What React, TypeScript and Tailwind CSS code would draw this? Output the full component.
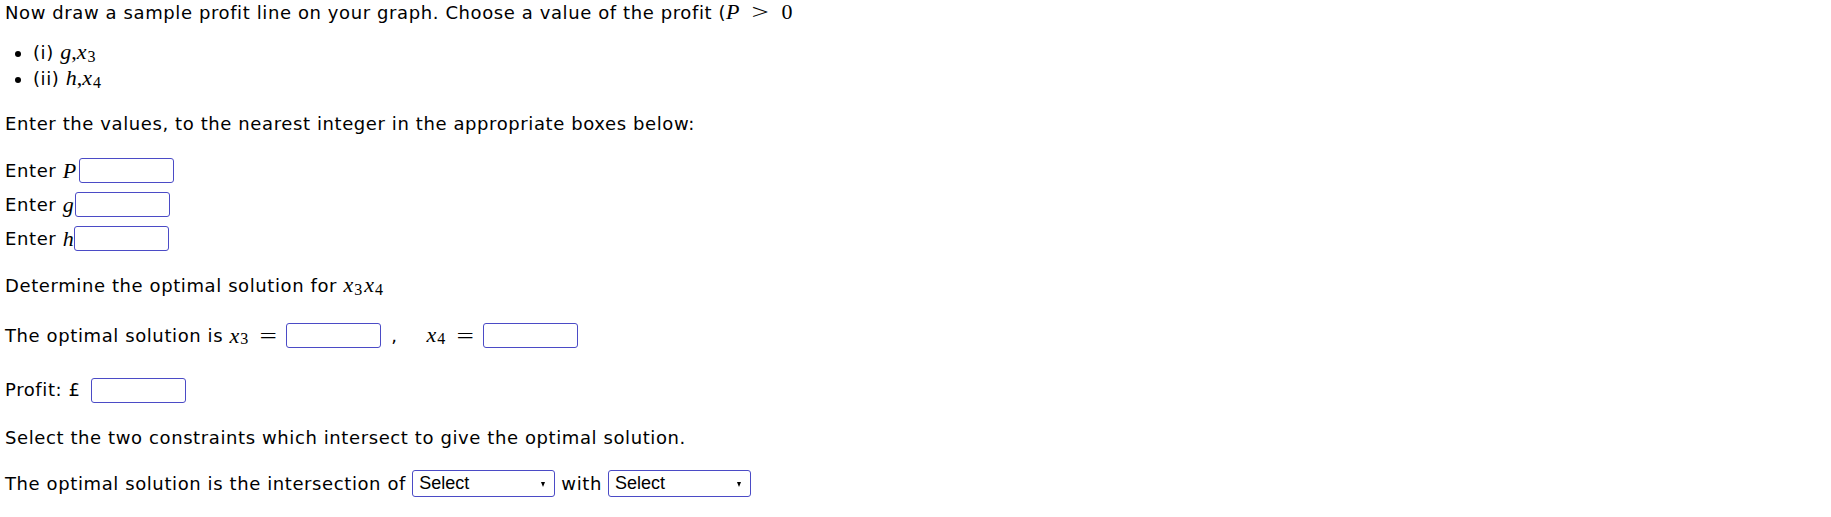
import React from "react";

const serif = "font-['Liberation_Serif','DejaVu_Serif',serif]";

function M({ children, className = "" }: { children: React.ReactNode; className?: string }) {
  return (
    <span className={`${serif} italic text-[22px] leading-none tracking-normal ${className}`}>
      {children}
    </span>
  );
}

function Sub({ children }: { children: React.ReactNode }) {
  return (
    <span className={`${serif} not-italic text-[16px] relative top-[3px] ml-[1px] mr-[2px] leading-none tracking-normal`}>
      {children}
    </span>
  );
}

function Op({ children, className = "" }: { children: React.ReactNode; className?: string }) {
  return <span className={`${serif} text-[22px] leading-none tracking-normal ${className}`}>{children}</span>;
}

// relation sign (=, >) with the wide glyph and side spacing of typeset math
function Rel({ children, className = "" }: { children: React.ReactNode; className?: string }) {
  return (
    <span className={`inline-flex justify-center ${className}`}>
      <span className={`${serif} inline-block text-[22px] leading-none tracking-normal scale-x-[1.4]`}>
        {children}
      </span>
    </span>
  );
}

function Box() {
  return (
    <input
      type="text"
      className="w-[95px] h-[25px] border border-[#4b4bc6] rounded-[3px] bg-white align-middle outline-none"
    />
  );
}

function Select() {
  return (
    <span className="relative inline-flex items-center align-middle w-[143px] h-[27px] border border-[#4b4bc6] rounded-[3px] bg-white pl-[6px] font-['Liberation_Sans',Arial,sans-serif] text-[18px] tracking-normal text-black">
      Select
      <span className="absolute right-[9px] top-[11px] w-0 h-0 border-l-[2.5px] border-r-[2.5px] border-t-[5px] border-l-transparent border-r-transparent border-t-black" />
    </span>
  );
}

export default function App() {
  return (
    <div className="bg-white min-h-[517px] pl-[5px] pt-[1px] text-[18px] tracking-[0.6px] text-black font-['DejaVu_Sans',Verdana,sans-serif]">
      <p className="h-[21px] leading-[21px]">
        Now draw a sample profit line on your graph. Choose a value of the profit (<M>P</M>
        <Rel className="w-[42px]">&gt;</Rel>
        <Op>0</Op>
      </p>

      <ul className="list-disc pl-[28px] mt-[18px]">
        <li className="h-[26px] leading-[26px]">
          (i) <M>g</M>
          <Op>,</Op>
          <M>x</M>
          <Sub>3</Sub>
        </li>
        <li className="h-[26px] leading-[26px]">
          (ii) <M>h</M>
          <Op>,</Op>
          <M>x</M>
          <Sub>4</Sub>
        </li>
      </ul>

      <p className="mt-[20px] h-[24px] leading-[24px]">
        Enter the values, to the nearest integer in the appropriate boxes below:
      </p>

      <div className="mt-[22px] flex flex-col gap-[9px]">
        <div className="h-[25px] flex items-center">
          Enter&nbsp;<M className="mr-[3px]">P</M>
          <Box />
        </div>
        <div className="h-[25px] flex items-center">
          Enter&nbsp;<M className="mr-[1px]">g</M>
          <Box />
        </div>
        <div className="h-[25px] flex items-center">
          Enter&nbsp;<M>h</M>
          <Box />
        </div>
      </div>

      <p className="mt-[23px] h-[24px] leading-[24px]">
        Determine the optimal solution for <M>x</M>
        <Sub>3</Sub>
        <M>x</M>
        <Sub>4</Sub>
      </p>

      <div className="mt-[25px] h-[25px] flex items-center">
        The optimal solution is&nbsp;<M>x</M>
        <Sub>3</Sub>
        <Rel className="w-[36px]">=</Rel>
        <Box />
        <span className="ml-[10px]">,</span>
        <span className="ml-[29px]"><M>x</M></span>
        <Sub>4</Sub>
        <Rel className="w-[36px]">=</Rel>
        <Box />
      </div>

      <div className="mt-[29px] h-[25px] flex items-center">
        Profit:&nbsp;£&nbsp;
        <span className="ml-[4px]">
          <Box />
        </span>
      </div>

      <p className="mt-[24px] h-[24px] leading-[24px]">
        Select the two constraints which intersect to give the optimal solution.
      </p>

      <div className="mt-[20px] h-[27px] flex items-center">
        The optimal solution is the intersection of&nbsp;
        <Select />
        <span className="mx-[6px]">with</span>
        <Select />
      </div>
    </div>
  );
}
